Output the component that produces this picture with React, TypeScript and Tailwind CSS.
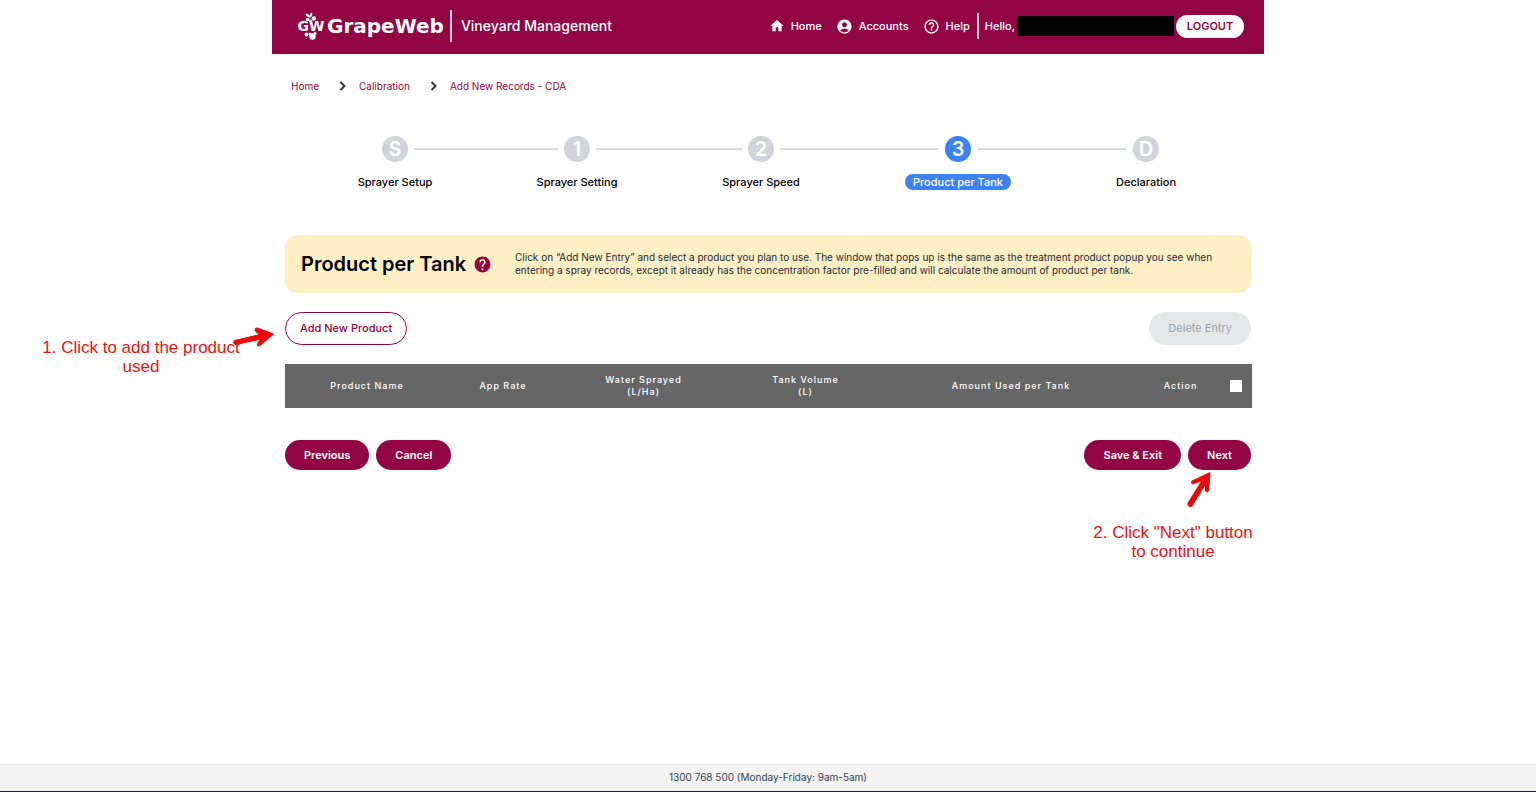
import { FunctionComponent, ReactNode } from 'react'
import { MdAccountCircle, MdHelp, MdHelpOutline, MdHome } from 'react-icons/md'

const steps = [
  { mark: 'S', label: 'Sprayer Setup', width: 'flex-[182]' },
  { mark: '1', label: 'Sprayer Setting', width: 'flex-[184]' },
  { mark: '2', label: 'Sprayer Speed', width: 'flex-[197]' },
  { mark: '3', label: 'Product per Tank', width: 'flex-[188]', active: true },
  { mark: 'D', label: 'Declaration', width: 'flex-none', last: true },
]

const columns = [
  { title: 'Product Name', width: 'w-[164px]' },
  { title: 'App Rate', width: 'w-[108px]' },
  { title: 'Water Sprayed', unit: '(L/Ha)', width: 'w-[173px]' },
  { title: 'Tank Volume', unit: '(L)', width: 'w-[151px]' },
  { title: 'Amount Used per Tank', width: 'w-[260px]' },
  { title: 'Action', width: 'w-[79px]' },
]

const Logo: FunctionComponent = () => (
  <a href="#" className="flex items-center gap-[2px] text-white">
    <svg width="28" height="30" viewBox="0 0 28 30" fill="currentColor" aria-hidden="true">
      <path d="M12.500 6.500 C10 6 8.500 4.500 8.500 2.500 C10.500 2.500 12 3.500 12.700 4.800 C12.700 3.200 13.500 2 15 1.500 C15.800 3.500 15 5.500 13.500 6.500 Z" />
      <circle cx="10.500" cy="8.500" r="1.800" />
      <circle cx="16.800" cy="7.500" r="2.200" />
      <circle cx="13.500" cy="10" r="1.500" />
      <circle cx="9.500" cy="23.500" r="1.900" />
      <circle cx="18" cy="22.500" r="1.600" />
      <circle cx="13" cy="23" r="1.300" />
      <circle cx="15.500" cy="25.500" r="3.200" />
      <text x="14" y="20" textAnchor="middle" fontFamily="DejaVu Sans" fontSize="14" fontWeight="700">
        GW
      </text>
    </svg>
    <span className="font-['DejaVu_Sans',sans-serif] text-[20px] leading-7 font-bold">GrapeWeb</span>
  </a>
)

const NavLink: FunctionComponent<{ icon: ReactNode; children: ReactNode }> = ({ icon, children }) => (
  <a href="#" className="flex items-center gap-[6px]">
    {icon}
    <span>{children}</span>
  </a>
)

const Header: FunctionComponent = () => (
  <header className="flex h-[54px] items-center justify-between bg-[#930445] pr-5 pb-[2px] pl-[25px] text-[11px] font-medium text-white">
    <div className="flex items-center">
      <Logo />
      <div className="ml-[6px] h-8 border-l-2 border-white/80 pl-[9px] text-sm leading-8">Vineyard Management</div>
    </div>
    <nav className="flex items-center gap-[14px]">
      <NavLink icon={<MdHome size={16} />}>Home</NavLink>
      <NavLink icon={<MdAccountCircle size={17} />}>Accounts</NavLink>
      <NavLink icon={<MdHelpOutline size={17} />}>Help</NavLink>
      <div className="-ml-[7px] flex h-[26px] items-center border-l-2 border-white/80 pl-[6px]">
        <span>Hello,</span>
        <span className="ml-[2px] h-5 w-[157px] bg-black" />
        <button className="ml-[2px] h-[23px] w-[68px] rounded-full bg-white text-[11px] font-semibold text-[#930445]">
          LOGOUT
        </button>
      </div>
    </nav>
  </header>
)

const Chevron: FunctionComponent = () => (
  <svg width="8" height="10" viewBox="0 0 8 10" fill="none" stroke="#333" strokeWidth="2" aria-hidden="true">
    <path d="M1.500 1 L5.500 5 L1.500 9" />
  </svg>
)

const Breadcrumbs: FunctionComponent = () => (
  <nav className="flex items-center px-[6px] text-[10px] leading-4 text-[#930445]">
    <a href="#">Home</a>
    <span className="mr-3 ml-5">
      <Chevron />
    </span>
    <a href="#">Calibration</a>
    <span className="mr-3 ml-5">
      <Chevron />
    </span>
    <a href="#">Add New Records - CDA</a>
  </nav>
)

const Stepper: FunctionComponent = () => (
  <ol className="mt-[42px] flex items-start pr-[92px] pl-[97px]">
    {steps.map(step => (
      <li key={step.mark} className={`flex ${step.width}`}>
        <div className="flex w-[26px] shrink-0 flex-col items-center">
          <span
            className={`flex size-[26px] items-center justify-center rounded-full text-xl font-semibold text-white ${
              step.active ? 'bg-[#3b82f6]' : 'bg-[#d1d5db]'
            }`}
          >
            {step.mark}
          </span>
          <span
            className={`mt-3 rounded-full px-2 text-[11px] leading-4 font-medium whitespace-nowrap ${
              step.active ? 'bg-[#3b82f6] text-white' : 'text-black'
            }`}
          >
            {step.label}
          </span>
        </div>
        {!step.last && <span className="mx-[6px] mt-3 h-[2px] flex-1 bg-[#d9dce1]" />}
      </li>
    ))}
  </ol>
)

const FormButton: FunctionComponent<{ children: ReactNode }> = ({ children }) => (
  <button className="h-[30px] rounded-full bg-[#930445] px-[19px] text-[11px] font-semibold text-white">
    {children}
  </button>
)

const AddNote: FunctionComponent = () => (
  <div className="absolute top-[14px] right-full mr-[11px] w-[230px] text-[#ee1111]">
    <p className="mr-[32px] -ml-1 pt-3 text-center font-['Liberation_Sans',sans-serif] text-[17px] leading-[19px]">
      1. Click to add the product
      <br />
      used
    </p>
    <svg className="absolute top-0 right-0" width="42" height="22" viewBox="0 0 42 22" aria-hidden="true">
      <path
        d="M2.500 14.500 L27 8.800 L23 4.500 Q22.500 1.500 25.500 2 L41.500 8 L28 19.500 Q24.500 20.500 25.500 17.500 L28.500 13.200 L3.500 18.500 Q0 17.500 2.500 14.500 Z"
        fill="#ee0808"
        stroke="#ee0808"
      />
    </svg>
  </div>
)

const NextNote: FunctionComponent = () => (
  <div className="absolute top-full right-0 w-[156px] text-[#ee1111]">
    <svg className="ml-[91px]" width="26" height="40" viewBox="0 0 26 40" aria-hidden="true">
      <path
        d="M2 33 L16 10.500 L7 14 Q4.500 13.500 6 11 L24 2.500 L22.500 21 Q20.500 23 19.500 21 L19.500 14 L6 36 Q1.500 38 2 33 Z"
        fill="#ee0808"
        stroke="#ee0808"
      />
    </svg>
    <p className="-mx-1 mt-[13px] text-center font-['Liberation_Sans',sans-serif] text-[17px] leading-[19px] whitespace-nowrap">
      2. Click "Next" button
      <br />
      to continue
    </p>
  </div>
)

const App: FunctionComponent = () => (
  <div className="flex min-h-screen flex-col bg-white font-['Inter',sans-serif]">
    <div className="mx-auto w-full max-w-[992px]">
      <Header />
      <main className="px-[13px] pt-6">
        <Breadcrumbs />
        <Stepper />

        <section className="mt-[45px] flex min-h-[58px] items-center rounded-xl bg-[#fff0c4] px-4">
          <h1 className="flex w-[214px] shrink-0 items-center gap-[7px] text-xl font-semibold whitespace-nowrap text-black">
            Product per Tank
            <MdHelp size={19} className="text-[#930445]" />
          </h1>
          <p className="text-[10px] leading-[13px] text-gray-800">
            Click on “Add New Entry” and select a product you plan to use. The window that pops up is the same as the
            treatment product popup you see when entering a spray records, except it already has the concentration
            factor pre-filled and will calculate the amount of product per tank.
          </p>
        </section>

        <div className="mt-[19px] flex items-center justify-between">
          <div className="relative">
            <button className="h-[33px] rounded-full border border-[#930445] px-[14px] text-[11px] font-medium text-[#930445]">
              Add New Product
            </button>
            <AddNote />
          </div>
          <button disabled className="h-[33px] rounded-full bg-[#e5e7eb] px-[19px] text-[11px] text-[#9ca3af]">
            Delete Entry
          </button>
        </div>

        <table className="mt-[19px] w-full table-fixed bg-[#666] text-[9px] leading-3 tracking-[1px] text-white">
          <thead>
            <tr className="h-11">
              {columns.map(column => (
                <th key={column.title} scope="col" className={`${column.width} p-0 font-medium`}>
                  {column.title}
                  {column.unit && <div>{column.unit}</div>}
                </th>
              ))}
              <th scope="col" className="w-[32px] p-0">
                <input
                  type="checkbox"
                  aria-label="Select all products"
                  className="mx-auto block size-3 appearance-none bg-white"
                />
              </th>
            </tr>
          </thead>
        </table>

        <div className="mt-8 flex justify-between">
          <div className="flex gap-[7px]">
            <FormButton>Previous</FormButton>
            <FormButton>Cancel</FormButton>
          </div>
          <div className="relative flex gap-[7px]">
            <FormButton>Save &amp; Exit</FormButton>
            <FormButton>Next</FormButton>
            <NextNote />
          </div>
        </div>
      </main>
    </div>

    <footer className="mt-auto h-7 border-t border-b border-t-gray-200 border-b-gray-800 bg-[#f4f4f4] text-center text-[10px] leading-6 text-gray-700">
      1300 768 500 (Monday-Friday: 9am-5am)
    </footer>
  </div>
)

export default App
